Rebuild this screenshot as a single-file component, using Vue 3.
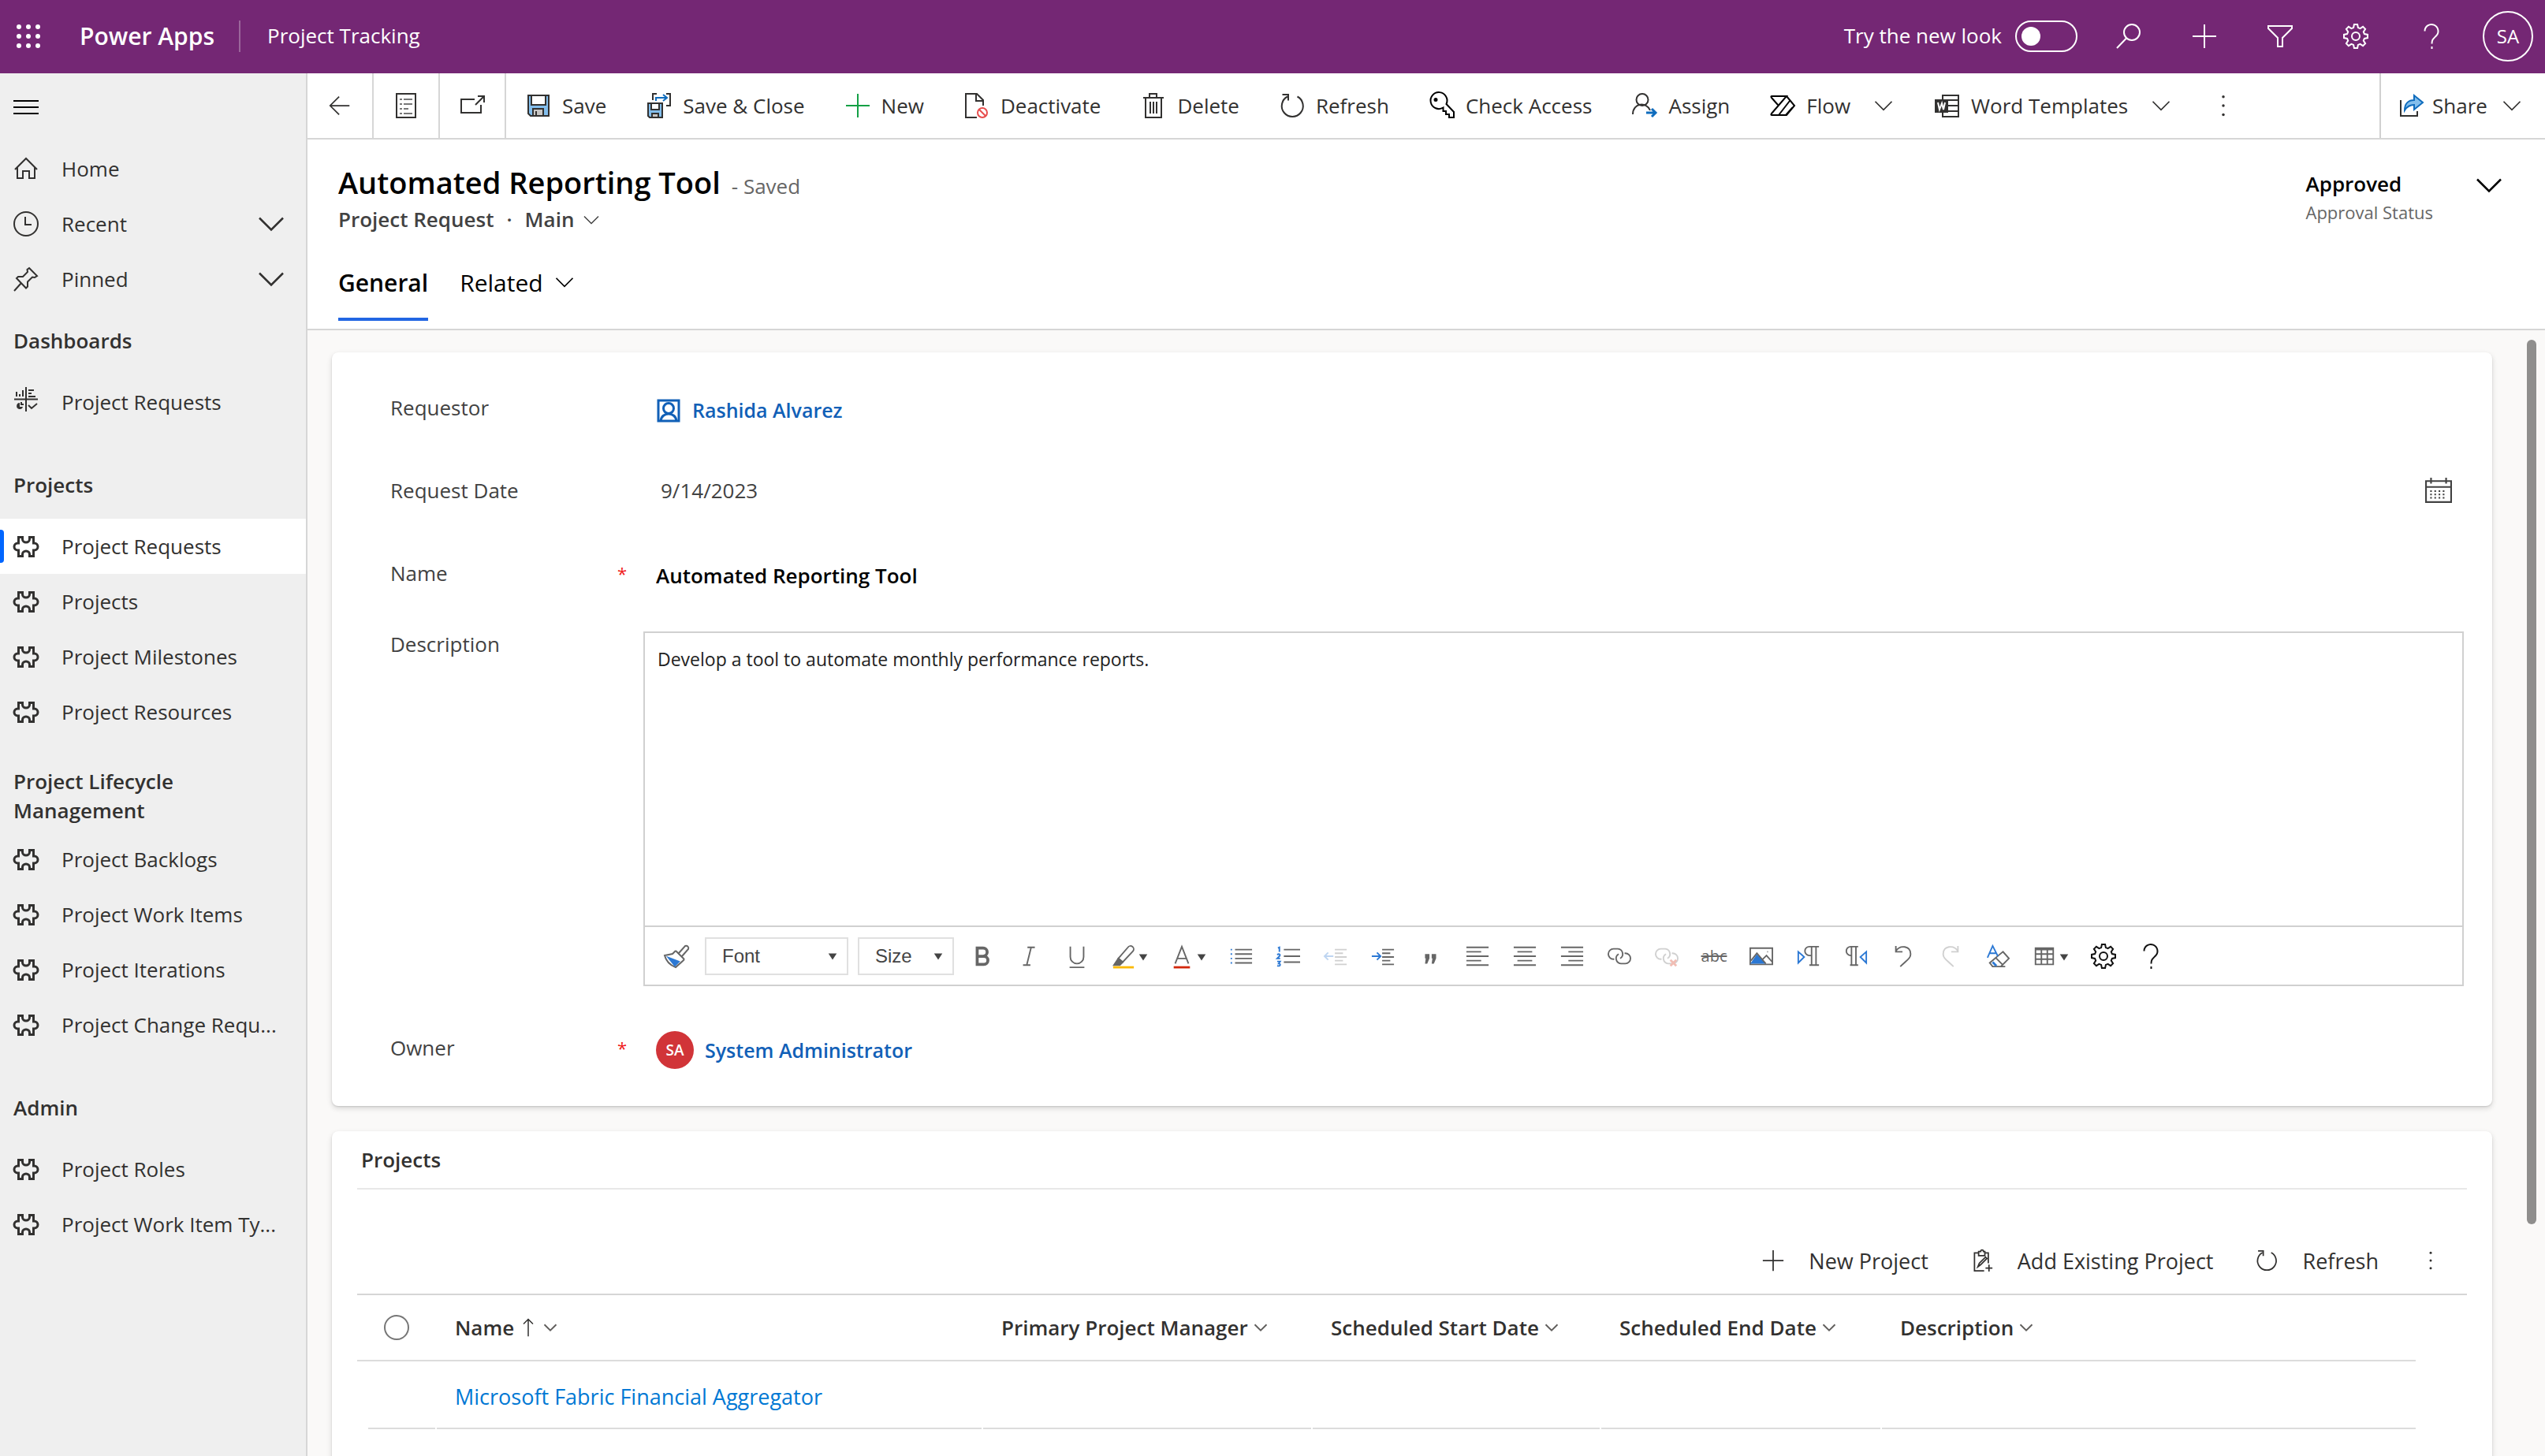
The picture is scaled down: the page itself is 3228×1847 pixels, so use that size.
<script setup>
import { h } from 'vue'

const chevron = '<path d="M4 10l12 12 12-12"/>'
const refresh = '<path d="M10 4.500A13.500 13.500 0 1 0 22.500 4.500"/><path d="M3.500 2H11v7.500"/>'
const gear = '<path d="M13.900 1h4.200l.8 4.100 2.700 1.100L25.100 3.900 28.100 6.900 25.800 10.400 26.900 13.100 31 13.900v4.200l-4.100.8-1.100 2.700 2.300 3.500-3 3-3.500-2.300-2.700 1.100L18.100 31h-4.200l-.8-4.100-2.700-1.100-3.500 2.300-3-3 2.300-3.500-1.100-2.700L1 18.100v-4.200l4.100-.8 1.100-2.700-2.300-3.500 3-3 3.500 2.300 2.700-1.100z"/><circle cx="16" cy="16" r="5"/>'
const help = '<path d="M7.500 9.500a8.500 8.500 0 1 1 14.500 6c-3.500 3.500-5.500 4.500-5.500 10"/><path d="M16.500 29v3"/>'
const chain = '<path d="M9 20H8A7 7 0 0 1 8 6h6a7 7 0 0 1 3 13"/><path d="M23 12h1a7 7 0 0 1 0 14h-6a7 7 0 0 1-3-13"/>'
const blue = 'stroke="#2b78d4"'

const icons = {
  chevron,
  refresh,
  gear,
  help,
  waffle: '<g fill="currentColor" stroke="none"><circle cx="4" cy="4" r="3"/><circle cx="16" cy="4" r="3"/><circle cx="28" cy="4" r="3"/><circle cx="4" cy="16" r="3"/><circle cx="16" cy="16" r="3"/><circle cx="28" cy="16" r="3"/><circle cx="4" cy="28" r="3"/><circle cx="16" cy="28" r="3"/><circle cx="28" cy="28" r="3"/></g>',
  search: '<circle cx="20" cy="11" r="10"/><path d="M13 18.500L1 31"/>',
  plus: '<path d="M16 1v30M1 16h30"/>',
  filter: '<path d="M1 3h30v3L19 18v11h-6V18L1 6z"/>',
  menu: '<path d="M0 8h32M0 16h32M0 24h32"/>',
  home: '<path d="M2 17L16 3l14 14M5 14v14h7V19h8v9h7V14"/>',
  clock: '<circle cx="16" cy="16" r="15"/><path d="M15 7v10h8"/>',
  pin: '<path d="M20 2l10 10-3 2-3-.500-6 6v6l-2 2L4 15l2-2h6l6-6-.500-3zM10 21L1 31"/>',
  dashboard: '<path d="M16-3v31M1 12.500h30M4 9V3M8 9V6M12 9V1M19 1h7M19 5h4M19 9h9M19 20l4 4 7-6"/><path d="M8 17a4 4 0 1 0 4 5H8z" fill="currentColor" stroke="none"/><path d="M10 16v3h3"/>',
  puzzle: '<path d="M6.500 4.500h5V7a4.500 4 0 0 0 9 0V4.500h5V12h1a4.500 4.500 0 0 1 0 9h-1v7.500h-5V26a4.500 4 0 0 0-9 0v2.500h-5V21h-1a4.500 4.500 0 0 1 0-9h1z"/>',
  back: '<path d="M30 16H3M15 3L2 16l13 13"/>',
  form: '<path d="M4 1h24v30H4z"/><path d="M8 8h3M13 8h11M8 14h3M13 14h11M8 20h3M13 20h6M8 26h3M13 26h11" stroke="#777"/>',
  popout: '<path d="M19 8H2v17h25V15M20 15L31 4M23 4h8v8"/>',
  save: '<path d="M3 3h26v26H6l-3-3z" fill="#83beec"/><path d="M7 3h18v12H7z" fill="#fff"/><path d="M9 20h13v9H9z" fill="#c8c6c4"/><path d="M13 23v6"/>',
  saveClose: '<path d="M8 9V1h5M25 1h5v15h-5"/><path d="M12 10V6h14M21 2l5 4-5 4" stroke="#0f6cbd"/><path d="M2 13h18v18H4l-2-2z" fill="#83beec"/><path d="M6 13h10v8H6z" fill="#fff"/><path d="M7 26h8v5H7z" fill="#c8c6c4"/>',
  deactivate: '<path d="M16 31H2V1h14l8 8v7M15 1v9h9"/><g stroke="#e74c4c"><circle cx="23" cy="25" r="6"/><path d="M19 21l8 8"/></g>',
  trash: '<path d="M3 6h26M11 6V1h9v5M6 6v25h20V6M12 11v15M16 11v15M20 11v15"/>',
  key: '<path d="M21.500 14L31 24v7h-6v-4h-4v-4h-3.500v-4.500A10.500 10.500 0 1 1 21.500 14z"/><circle cx="8" cy="8.500" r="1.500" fill="currentColor"/>',
  assign: '<circle cx="13" cy="8.500" r="7.500"/><path d="M1 27c0-15 18-16 22-5"/><path d="M18 25h12M25 20l5 5-5 5" stroke="#0f6cbd" stroke-width="3"/>',
  flow: '<path d="M21 4l10 12-10 12H2.500q-2 0-.500-2L21 4H2.500q-2 0-.500 2l8 9M11 28L25 10M20 28l8-9"/>',
  word: '<path d="M10 3h20v27H10z"/><path d="M16 9h14M16 16h14M16 23h14"/><path d="M1 9h15v15H1z" fill="currentColor"/><path d="M4 12l2 9 3-8 2 8 2-9" stroke="#fff"/>',
  dots: '<g fill="currentColor" stroke="none"><circle cx="16" cy="3" r="2"/><circle cx="16" cy="16" r="2"/><circle cx="16" cy="29" r="2"/></g>',
  share: '<path d="M3 9v20h21v-6"/><path d="M8 22C8 13 13 9 20 9V3l11 9-11 9v-6c-5 0-9 2-12 7z" fill="#83beec" stroke="#0f6cbd"/>',
  person: '<path d="M3 3h26v26H3z"/><circle cx="16" cy="13" r="6.500"/><path d="M6 29c1-12 19-12 20 0"/>',
  calendar: '<path d="M1 4h30v25H1zM1 11h30M7 0v7M25 0v7"/><path d="M6 16h20M6 20h20M6 24h20" stroke-dasharray="2 3"/>',
  brush: '<path d="M19 12l8-9a3 3 0 0 1 4 4l-8 9M15 9l11 11M15 9l-4 4-10 2c2 8 6 12 14 15l9-8 2-2"/><path d="M6 18l13 5-5 5z" fill="#2b78d4" stroke="#2b78d4"/>',
  bold: '<path d="M9 5h8a5.500 5.500 0 0 1 0 11H9zM9 16h9a5.500 5.500 0 0 1 0 11H9z" stroke-width="4"/>',
  italic: '<path d="M13 4h10M7 28h10M18 4l-6 24"/>',
  underline: '<path d="M7 3v14a9 9 0 0 0 18 0V3M6 31h20"/>',
  highlight: '<path d="M9 19L22 4a4 4 0 0 1 7 5L15 24z"/><path d="M9 19l6 5-4 4H3z" fill="currentColor"/><path d="M2 31h28" stroke="#fbb900" stroke-width="3"/>',
  fontColor: '<path d="M7 26L16 3l9 23M10 19h12"/><path d="M5 31h22" stroke="#d3270b" stroke-width="3"/>',
  bullets: '<path d="M8 7h23M8 13h23M8 19h23M8 25h23"/><path d="M2 7h2M2 13h2M2 19h2M2 25h2" stroke="#2b78d4"/>',
  numbers: '<path d="M10 7h22M10 16h22M10 24h22"/><g stroke="#2b78d4"><path d="M2 5l2-1v6M1 14c3-2 5 0 3 2l-3 3h4M1 23h4l-2 3c3 0 3 4-2 3"/></g>',
  outdent: '<path d="M15 7h16M15 12h11M15 17h16M15 22h11M15 27h16"/><path d="M13 16H1M6 11l-5 5 5 5" stroke="#2b78d4"/>',
  indent: '<path d="M15 7h16M15 12h11M15 17h16M15 22h11M15 27h16"/><path d="M1 16h12M8 11l5 5-5 5" stroke="#2b78d4"/>',
  quote: '<g fill="currentColor" stroke="none"><path d="M9 13h6v6l-3 7H9l1-7H9zM18 13h6v6l-3 7h-3l1-7h-1z"/></g>',
  left: '<path d="M1 4h30M1 10h20M1 16h30M1 22h20M1 28h30"/>',
  center: '<path d="M1 4h30M6 10h20M1 16h30M6 22h20M1 28h30"/>',
  right: '<path d="M1 4h30M11 10h20M1 16h30M11 22h20M1 28h30"/>',
  link: chain,
  unlink: chain + '<path d="M21 21l8 8M29 21l-8 8" stroke="#d3270b" stroke-width="3"/>',
  image: '<path d="M1 5h30v22H1z"/><path d="M3 25l7-10 10 10z" fill="#2b78d4" stroke="#2b78d4"/><path d="M2 22l8-10 12 14M17 21l6-6 8 9M24 10h1"/>',
  ltr: '<path d="M30 3H17a6 6 0 0 0 0 12h3M20 3v25M26 3v25M17 28h13"/><path d="M2 10l8 7-8 8z" ' + blue + '/>',
  rtl: '<path d="M19 3H9a6 6 0 0 0 0 12h1M10 3v25M16 3v25M8 28h11"/><path d="M30 10l-8 7 8 8z" ' + blue + '/>',
  undo: '<path d="M6 2v8h9M6 9C12 0 26 2 26 13c0 6-5 8-14 17"/>',
  redo: '<path d="M26 2v8h-9M26 9C20 0 6 2 6 13c0 6 5 8 14 17"/>',
  eraser: '<path d="M18 14l5-4 8 9-11 11H9l-4-5 13-11M13 18l9 9M8 30h18"/><path d="M2 18L9 2l7 14M5 12h8" ' + blue + '/><path d="M9 24l5 5" ' + blue + ' stroke-width="3"/>',
  table: '<path d="M4 5h24v22H4zM4 7h24M4 13h24M4 20h24M12 7v20M20 7v20"/>',
  caret: '<path d="M4 8h24L16 26z" fill="currentColor" stroke="none"/>',
  sortUp: '<path d="M16 31V2M8 10l8-8 8 8"/>',
  clipboard: '<path d="M25 20V5h-5M11 5H5v26h14M11 3h3c0-3 4-3 4 0h2v6h-9zM21 27h10M26 22v10M10 25l2-5 9-9 2 2-9 9z"/>',
}

const Icon = (props) =>
  h('svg', {
    viewBox: '0 0 32 32',
    fill: 'none',
    stroke: 'currentColor',
    'stroke-width': 2,
    'aria-hidden': 'true',
    innerHTML: icons[props.name],
  })
Icon.props = ['name']

const navGroups = [
  { title: 'Dashboards', items: [{ label: 'Project Requests', icon: 'dashboard' }] },
  {
    title: 'Projects',
    items: [
      { label: 'Project Requests', icon: 'puzzle', active: true },
      { label: 'Projects', icon: 'puzzle' },
      { label: 'Project Milestones', icon: 'puzzle' },
      { label: 'Project Resources', icon: 'puzzle' },
    ],
  },
  {
    title: 'Project Lifecycle Management',
    items: [
      { label: 'Project Backlogs', icon: 'puzzle' },
      { label: 'Project Work Items', icon: 'puzzle' },
      { label: 'Project Iterations', icon: 'puzzle' },
      { label: 'Project Change Requ...', icon: 'puzzle' },
    ],
  },
  {
    title: 'Admin',
    items: [
      { label: 'Project Roles', icon: 'puzzle' },
      { label: 'Project Work Item Ty...', icon: 'puzzle' },
    ],
  },
]

const commands = [
  { label: 'Save', icon: 'save' },
  { label: 'Save & Close', icon: 'saveClose' },
  { label: 'New', icon: 'plus', tone: 'green' },
  { label: 'Deactivate', icon: 'deactivate' },
  { label: 'Delete', icon: 'trash' },
  { label: 'Refresh', icon: 'refresh' },
  { label: 'Check Access', icon: 'key', tone: 'black' },
  { label: 'Assign', icon: 'assign' },
  { label: 'Flow', icon: 'flow', menu: true, tone: 'black' },
  { label: 'Word Templates', icon: 'word', menu: true },
]

const tools = [
  { icon: 'bold', label: 'Bold' },
  { icon: 'italic', label: 'Italic' },
  { icon: 'underline', label: 'Underline' },
  { icon: 'highlight', label: 'Highlight color', menu: true },
  { icon: 'fontColor', label: 'Font color', menu: true },
  { icon: 'bullets', label: 'Bulleted list' },
  { icon: 'numbers', label: 'Numbered list' },
  { icon: 'outdent', label: 'Decrease indent', disabled: true },
  { icon: 'indent', label: 'Increase indent' },
  { icon: 'quote', label: 'Block quote' },
  { icon: 'left', label: 'Align left' },
  { icon: 'center', label: 'Align center' },
  { icon: 'right', label: 'Align right' },
  { icon: 'link', label: 'Link' },
  { icon: 'unlink', label: 'Unlink', disabled: true },
  { icon: 'strike', label: 'Strikethrough', text: 'abc' },
  { icon: 'image', label: 'Image' },
  { icon: 'ltr', label: 'Left to right' },
  { icon: 'rtl', label: 'Right to left' },
  { icon: 'undo', label: 'Undo' },
  { icon: 'redo', label: 'Redo', disabled: true },
  { icon: 'eraser', label: 'Clear formatting' },
  { icon: 'table', label: 'Table', menu: true },
  { icon: 'gear', label: 'Settings', dark: true },
  { icon: 'help', label: 'Help', dark: true },
]

const columns = ['Name', 'Primary Project Manager', 'Scheduled Start Date', 'Scheduled End Date', 'Description']
</script>

<template>
  <div class="app">
    <header class="topbar">
      <button class="waffle" aria-label="App launcher"><Icon name="waffle" class="i32" /></button>
      <a class="brand" href="#">Power Apps</a>
      <span class="rule"></span>
      <a class="appname" href="#">Project Tracking</a>
      <label class="newlook">Try the new look <input type="checkbox" class="switch" /></label>
      <button v-for="n in ['search', 'plus', 'filter', 'gear', 'help']" :key="n" class="topbtn" :aria-label="n">
        <Icon :name="n" class="i32" />
      </button>
      <button class="me">SA</button>
    </header>

    <div class="shell">
      <nav class="side">
        <button class="burger" aria-label="Toggle navigation"><Icon name="menu" class="i32" /></button>
        <a class="item" href="#"><Icon name="home" class="i32" />Home</a>
        <a class="item" href="#"><Icon name="clock" class="i32" />Recent<Icon name="chevron" class="i40 push" /></a>
        <a class="item" href="#"><Icon name="pin" class="i32" />Pinned<Icon name="chevron" class="i40 push" /></a>
        <section v-for="g in navGroups" :key="g.title" class="group">
          <h2>{{ g.title }}</h2>
          <a v-for="it in g.items" :key="it.label" href="#" class="item" :class="{ active: it.active }">
            <Icon :name="it.icon" class="i32" :class="{ heavy: it.icon === 'puzzle' }" />{{ it.label }}
          </a>
        </section>
      </nav>

      <main class="main">
        <div class="cmdbar">
          <button class="sq" aria-label="Back"><Icon name="back" class="i28" /></button>
          <button class="sq" aria-label="Form"><Icon name="form" class="i32" /></button>
          <button class="sq" aria-label="Open in new window"><Icon name="popout" class="i32" /></button>
          <div class="cmds">
            <button v-for="c in commands" :key="c.label" class="cmd">
              <Icon :name="c.icon" class="i32" :class="c.tone" />{{ c.label }}
              <Icon v-if="c.menu" name="chevron" class="i28 cmdchev" />
            </button>
            <button class="cmd" aria-label="More commands"><Icon name="dots" class="i28" /></button>
          </div>
          <button class="share"><Icon name="share" class="i32" />Share<Icon name="chevron" class="i28 sharechev" /></button>
        </div>

        <div class="record">
          <div class="headrow">
            <div>
              <div class="titleline"><h1>Automated Reporting Tool</h1><span>- Saved</span></div>
              <div class="subline">
                <span>Project Request</span><span class="dot">·</span>
                <button>Main<Icon name="chevron" class="i24" /></button>
              </div>
            </div>
            <div class="status">
              <div><strong>Approved</strong><small>Approval Status</small></div>
              <button aria-label="More header fields"><Icon name="chevron" class="i40" /></button>
            </div>
          </div>
          <div class="tabs" role="tablist">
            <button class="on" role="tab">General</button>
            <button role="tab">Related<Icon name="chevron" class="i28" /></button>
          </div>
        </div>

        <div class="body">
          <form class="card form" @submit.prevent>
            <div class="field">
              <span class="lab">Requestor</span>
              <a href="#" class="lookup"><Icon name="person" class="i32 heavy" />Rashida Alvarez</a>
            </div>
            <div class="field">
              <label class="lab" for="rdate">Request Date</label>
              <div class="date">
                <input id="rdate" value="9/14/2023" />
                <button type="button" aria-label="Pick a date"><Icon name="calendar" class="i34" /></button>
              </div>
            </div>
            <div class="field">
              <label class="lab req" for="rname">Name</label>
              <input id="rname" class="strong" value="Automated Reporting Tool" />
            </div>
            <div class="field top">
              <label class="lab" for="rdesc">Description</label>
              <div class="editor">
                <textarea id="rdesc">Develop a tool to automate monthly performance reports.</textarea>
                <div class="tools">
                  <button type="button" class="tool" aria-label="Format painter"><Icon name="brush" class="i32" /></button>
                  <span class="pick font"><select aria-label="Font"><option>Font</option></select><Icon name="caret" class="i14" /></span>
                  <span class="pick size"><select aria-label="Size"><option>Size</option></select><Icon name="caret" class="i14" /></span>
                  <button v-for="t in tools" :key="t.icon" type="button" class="tool" :class="{ wide: t.menu, off: t.disabled, dark: t.dark }" :disabled="t.disabled" :aria-label="t.label">
                    <s v-if="t.text">{{ t.text }}</s>
                    <Icon v-else :name="t.icon" :class="t.dark ? 'i32' : 'i30'" />
                    <Icon v-if="t.menu" name="caret" class="i14" />
                  </button>
                </div>
              </div>
            </div>
            <div class="field owner">
              <span class="lab req">Owner</span>
              <a href="#" class="lookup"><span class="avatar">SA</span>System Administrator</a>
            </div>
          </form>

          <section class="card grid">
            <h2>Projects</h2>
            <div class="gridcmds">
              <button><Icon name="plus" class="i28" />New Project</button>
              <button><Icon name="clipboard" class="i28" />Add Existing Project</button>
              <button><Icon name="refresh" class="i28" />Refresh</button>
              <button aria-label="More commands"><Icon name="dots" class="i24" /></button>
            </div>
            <table>
              <colgroup><col class="c0" /><col class="c1" /><col class="c2" /><col class="c3" /><col class="c4" /><col /></colgroup>
              <thead>
                <tr>
                  <th><input type="checkbox" class="round" aria-label="Select all rows" /></th>
                  <th v-for="(c, i) in columns" :key="c" scope="col">
                    <span>{{ c }}<Icon v-if="i === 0" name="sortUp" class="i24" /><Icon name="chevron" class="i20 heavy grey" /></span>
                  </th>
                </tr>
              </thead>
              <tbody>
                <tr>
                  <td></td>
                  <td><a href="#">Microsoft Fabric Financial Aggregator</a></td>
                  <td></td><td></td><td></td><td></td>
                </tr>
              </tbody>
            </table>
          </section>
          <div class="scroll"></div>
        </div>
      </main>
    </div>
  </div>
</template>

<style>
body { margin: 0; overflow: hidden; }
</style>

<style scoped>
* { box-sizing: border-box; }
.app { height: 100vh; display: flex; flex-direction: column; font-family: "Open Sans", "Noto Sans", sans-serif; font-size: 26px; line-height: 37px; color: #323130; overflow: hidden; }
button, input, select, textarea { font: inherit; color: inherit; background: none; border: 0; padding: 0; margin: 0; border-radius: 0; outline: 0; }
button { display: flex; align-items: center; white-space: nowrap; }
a { color: inherit; text-decoration: none; }
h1, h2 { margin: 0; font-weight: 600; }
svg { flex: none; display: block; overflow: visible; }
.i14 { width: 14px; height: 14px; }
.i20 { width: 20px; height: 20px; }
.i24 { width: 24px; height: 24px; }
.i28 { width: 28px; height: 28px; }
.i30 { width: 30px; height: 30px; }
.i32 { width: 32px; height: 32px; }
.i34 { width: 34px; height: 34px; }
.i40 { width: 40px; height: 40px; }
.heavy { stroke-width: 3px; }
.grey { color: #605e5c; }
.green { color: #13a045; }
.black { color: #000; }

.topbar { flex: none; height: 93px; padding: 0 15px 2px 20px; background: #742774; color: #fff; display: flex; align-items: center; }
.brand { margin-left: 49px; font-size: 30px; font-weight: 600; }
.rule { width: 2px; height: 40px; margin: 0 34px 0 31px; background: #9b659b; }
.newlook { margin-left: auto; margin-right: 17px; display: flex; align-items: center; gap: 17px; }
.switch { appearance: none; width: 79px; height: 40px; border: 2px solid #fff; border-radius: 20px; padding: 0 6px; display: flex; align-items: center; }
.switch::before { content: ""; width: 24px; height: 24px; border-radius: 50%; background: #fff; }
.topbtn { width: 96px; justify-content: center; }
.me { width: 64px; height: 64px; margin-left: 17px; border: 2px solid #fff; border-radius: 50%; justify-content: center; font-size: 24px; }

.shell { flex: 1; min-height: 0; display: flex; }
.side { flex: none; width: 390px; background: #efefef; border-right: 2px solid #d6d6d6; }
.burger { height: 86px; padding-left: 17px; color: #000; }
.item { position: relative; height: 70px; padding: 0 24px 0 17px; display: flex; align-items: center; gap: 29px; white-space: nowrap; }
.push { margin-left: auto; }
.item.active { background: #fff; }
.item.active::before { content: ""; position: absolute; left: 0; top: 14px; height: 42px; width: 5px; background: #0066ff; border-radius: 0 4px 4px 0; }
.group h2 { min-height: 86px; padding: 8px 120px 8px 17px; display: flex; align-items: center; font-size: 26px; }
.group + .group { margin-top: 27px; }

.main { flex: 1; min-width: 0; display: flex; flex-direction: column; background: #fff; }
.cmdbar { flex: none; height: 84px; display: flex; border-bottom: 2px solid #d6d6d6; }
.sq { width: 84px; justify-content: center; border-right: 2px solid #d6d6d6; }
.cmds { flex: 1; display: flex; align-items: center; padding-left: 25px; gap: 51px; }
.cmd { gap: 14px; }
.cmdchev { margin-left: 14px; }
.share { width: 210px; padding-left: 22px; border-left: 2px solid #d0d0d0; gap: 11px; }
.sharechev { margin-left: 6px; }

.record { flex: none; height: 242px; padding: 30px 51px 0 39px; border-bottom: 2px solid #d6d6d6; display: flex; flex-direction: column; justify-content: space-between; }
.headrow { display: flex; justify-content: space-between; }
.titleline { display: flex; align-items: baseline; gap: 14px; line-height: 48px; color: #666; }
h1 { font-size: 38px; color: #000; }
.subline { display: flex; align-items: center; font-weight: 600; color: #424242; }
.subline .dot { margin: 0 16px; }
.subline button { gap: 10px; }
.status { display: flex; align-items: flex-start; gap: 51px; padding-top: 8px; color: #000; }
.status strong, .status small { display: block; }
.status strong { font-weight: 600; }
.status small { font-size: 22px; line-height: 34px; color: #666; }
.tabs { display: flex; gap: 40px; font-size: 30px; color: #000; }
.tabs button { height: 74px; padding-bottom: 20px; margin-bottom: 10px; gap: 13px; border-bottom: 4px solid transparent; }
.tabs .on { font-weight: 600; border-color: #2266e3; }

.body { position: relative; flex: 1; min-height: 0; padding: 28px 67px 0 31px; background: #faf9f8; display: flex; flex-direction: column; gap: 32px; overflow: hidden; }
.card { flex: none; background: #fff; border-radius: 8px; box-shadow: 0 3px 7px rgba(0, 0, 0, .14), 0 1px 2px rgba(0, 0, 0, .12); }
.form { padding: 18px 36px 24px 74px; }
.field { display: grid; grid-template-columns: 321px 1fr; align-items: center; height: 105px; }
.lab { color: #424242; }
.req { display: flex; justify-content: space-between; padding-right: 21px; }
.req::after { content: "*"; color: #f01c1c; font-size: 22px; }
.lookup { display: flex; align-items: center; gap: 14px; padding: 6px 0 0 16px; font-size: 25px; font-weight: 600; color: #1160b7; }
.field input { width: 100%; padding-left: 22px; }
.field .strong { padding: 6px 0 0 16px; font-weight: 600; color: #000; }
.date { display: flex; align-items: center; padding-right: 15px; color: #424242; }
.field.top { height: auto; align-items: start; padding-top: 21px; }
.top .lab { line-height: 32px; }
.editor { border: 2px solid #d0d0d0; }
.editor textarea { display: block; width: 100%; height: 371px; padding: 15px 16px; resize: none; font-size: 23px; line-height: 36px; color: #222; }
.tools { height: 75px; padding-left: 10px; border-top: 2px solid #d0d0d0; display: flex; align-items: center; color: #666; }
.tool { width: 60px; height: 60px; justify-content: center; gap: 3px; }
.tool .i14 { color: #444; margin-top: 3px; }
.tool.wide { width: 74px; }
.tool.off { opacity: .3; }
.tool.dark { color: #111; }
.tool s { font-size: 20px; }
.pick { position: relative; display: flex; align-items: center; height: 48px; margin: 0 6px; border: 2px solid #e0e0e0; font-family: "Liberation Sans", Arial, sans-serif; font-size: 24px; color: #444; }
.pick select { appearance: none; width: 100%; height: 100%; padding-left: 20px; }
.pick svg { position: absolute; right: 11px; pointer-events: none; }
.font { width: 182px; }
.size { width: 122px; }
.owner { height: 100px; margin-top: 28px; }
.avatar { width: 48px; height: 48px; border-radius: 50%; background: #d13438; color: #fff; font-size: 19px; display: flex; align-items: center; justify-content: center; }

.grid { flex: 1 0 auto; margin-bottom: -20px; padding: 0 32px; }
.grid h2 { height: 74px; padding-left: 5px; border-bottom: 2px solid #e8e8e8; font-size: 26px; display: flex; align-items: center; }
.gridcmds { height: 134px; padding: 48px 34px 0 0; font-size: 27px; display: flex; justify-content: flex-end; align-items: center; gap: 54px; border-bottom: 2px solid #d6d6d6; }
.gridcmds button { gap: 31px; }
table { width: calc(100% - 65px); table-layout: fixed; border-collapse: separate; border-spacing: 0; }
.c0 { width: 99px; }
.c1 { width: 693px; }
.c2 { width: 418px; }
.c3 { width: 366px; }
.c4 { width: 356px; }
th { height: 84px; padding: 0 0 0 25px; text-align: left; font-weight: 600; border-bottom: 2px solid #dcdcdc; }
th:first-child { padding-left: 34px; }
th span { display: flex; align-items: center; gap: 6px; white-space: nowrap; }
td { height: 86px; padding: 2px 0 0 25px; font-size: 27px; background: linear-gradient(#dcdcdc, #dcdcdc) 2px 100% / 100% 2px no-repeat; }
td:first-child { background-position: 14px 100%; }
td a { color: #0078d4; }
.round { display: block; appearance: none; width: 32px; height: 32px; border: 2px solid #767676; border-radius: 50%; }
.scroll { position: absolute; right: 11px; top: 12px; bottom: 294px; width: 12px; border-radius: 6px; background: #8f8e8d; }
</style>
